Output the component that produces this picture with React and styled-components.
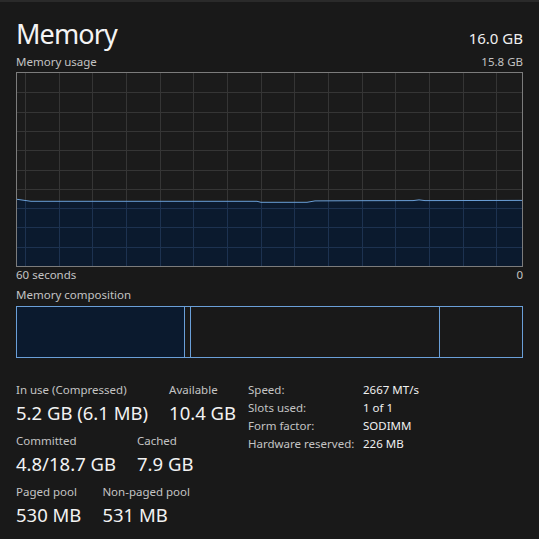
import React from "react";
import styled, { createGlobalStyle } from "styled-components";

const GlobalStyle = createGlobalStyle`
  html, body {
    margin: 0;
    padding: 0;
    background: #191919;
  }
  body {
    font-family: "Noto Sans", "Open Sans", sans-serif;
  }
`;

const CHART_W = 505;
const CHART_H = 193;
const COLS = 15;
const ROWS = 10;
const GRID_OFFSET = 8;

// memory history, x in px from left edge, y in px from top of plot area
const usage = [
  [0, 126.3],
  [14, 128.3],
  [240, 128.3],
  [244, 129.3],
  [290, 129.3],
  [298, 127.9],
  [345, 127.7],
  [396, 127.6],
  [402, 126.9],
  [408, 127.6],
  [CHART_W, 127.4]
];

const composition = [
  { width: 167, filled: true },
  { width: 5, filled: false },
  { width: 248, filled: false },
  { width: 82, filled: false }
];

const stats = [
  [
    { label: "In use (Compressed)", value: "5.2 GB (6.1 MB)" },
    { label: "Available", value: "10.4 GB" }
  ],
  [
    { label: "Committed", value: "4.8/18.7 GB" },
    { label: "Cached", value: "7.9 GB" }
  ],
  [
    { label: "Paged pool", value: "530 MB" },
    { label: "Non-paged pool", value: "531 MB" }
  ]
];

const details = [
  ["Speed:", "2667 MT/s"],
  ["Slots used:", "1 of 1"],
  ["Form factor:", "SODIMM"],
  ["Hardware reserved:", "226 MB"]
];

const Grid = ({ color }) => {
  const vLines = [];
  for (let i = 0; i < COLS; i++) {
    vLines.push(Math.round(GRID_OFFSET + (i * CHART_W) / COLS));
  }
  const hLines = [];
  for (let i = 1; i < ROWS; i++) {
    hLines.push(Math.round((i * CHART_H) / ROWS));
  }
  return (
    <g stroke={color}>
      {vLines.map(x => (
        <line key={`v${x}`} x1={x + 0.5} x2={x + 0.5} y1={0} y2={CHART_H} />
      ))}
      {hLines.map(y => (
        <line key={`h${y}`} x1={0} x2={CHART_W} y1={y + 0.5} y2={y + 0.5} />
      ))}
    </g>
  );
};

const UsageChart = () => {
  const line = usage.map(([x, y]) => `${x},${y}`).join(" ");
  const area = `0,${CHART_H} ${line} ${CHART_W},${CHART_H}`;

  return (
    <svg width={CHART_W} height={CHART_H} style={{ display: "block" }}>
      <defs>
        <clipPath id="usage-area">
          <polygon points={area} />
        </clipPath>
      </defs>
      <Grid color="#353535" />
      <polygon points={area} fill="#0b1a2e" />
      <g clipPath="url(#usage-area)">
        <Grid color="#1d3250" />
      </g>
      <polyline points={line} fill="none" stroke="#6a9fd8" strokeWidth="1" />
    </svg>
  );
};

const App = () => {
  return (
    <>
      <GlobalStyle />
      <Page>
        <Header>
          <Title>Memory</Title>
          <Total>16.0 GB</Total>
        </Header>
        <CaptionRow>
          <Caption>Memory usage</Caption>
          <Caption>15.8 GB</Caption>
        </CaptionRow>
        <ChartFrame>
          <UsageChart />
        </ChartFrame>
        <AxisRow>
          <Caption>60 seconds</Caption>
          <Caption>0</Caption>
        </AxisRow>
        <CompositionCaption>Memory composition</CompositionCaption>
        <CompositionBar>
          {composition.map((seg, i) => (
            <Segment
              key={i}
              $width={seg.width}
              $filled={seg.filled}
              $last={i === composition.length - 1}
            />
          ))}
        </CompositionBar>
        <Stats>
          <StatColumn>
            {stats.map((row, i) => (
              <StatRow key={i}>
                {row.map(item => (
                  <Stat key={item.label}>
                    <StatLabel>{item.label}</StatLabel>
                    <StatValue>{item.value}</StatValue>
                  </Stat>
                ))}
              </StatRow>
            ))}
          </StatColumn>
          <DetailGrid>
            {details.map(([k, v]) => (
              <React.Fragment key={k}>
                <DetailLabel>{k}</DetailLabel>
                <DetailValue>{v}</DetailValue>
              </React.Fragment>
            ))}
          </DetailGrid>
        </Stats>
      </Page>
    </>
  );
};

const Page = styled.div`
  width: 539px;
  height: 539px;
  box-sizing: border-box;
  border-top: 2px solid #2a2a2a;
  padding: 16px 16px 0 16px;
  background: #191919;
  color: #f2f2f2;
  overflow: hidden;
`;

const Header = styled.div`
  display: flex;
  justify-content: space-between;
  align-items: baseline;
  width: 507px;
`;

const Title = styled.div`
  font-size: 27px;
  line-height: 32px;
  color: #f4f4f4;
  letter-spacing: -0.9px;
`;

const Total = styled.div`
  font-size: 15px;
  line-height: 20px;
  color: #f0f0f0;
`;

const Caption = styled.div`
  font-size: 11.5px;
  line-height: 14px;
  color: #c4c4c4;
`;

const CaptionRow = styled.div`
  display: flex;
  justify-content: space-between;
  width: 507px;
  margin-top: 5px;
`;

const ChartFrame = styled.div`
  margin-top: 3px;
  width: 507px;
  height: 195px;
  box-sizing: border-box;
  border: 1px solid #7c7c7c;
  background: #1b1b1b;
`;

const AxisRow = styled(CaptionRow)`
  margin-top: 1px;
`;

const CompositionCaption = styled(Caption)`
  margin-top: 6px;
`;

const CompositionBar = styled.div`
  display: flex;
  margin-top: 4px;
  width: 507px;
  height: 52px;
  box-sizing: border-box;
  border: 1px solid #6a9fd8;
`;

const Segment = styled.div`
  width: ${({ $width }) => $width}px;
  flex: none;
  background: ${({ $filled }) => ($filled ? "#0b1a2e" : "transparent")};
  border-right: ${({ $last }) => ($last ? "none" : "1px solid #6a9fd8")};
`;

const Stats = styled.div`
  display: flex;
  margin-top: 25px;
`;

const StatColumn = styled.div`
  width: 232px;
  display: flex;
  flex-direction: column;
  gap: 10px;
`;

const StatRow = styled.div`
  display: flex;
  gap: 21px;
`;

const Stat = styled.div`
  display: flex;
  flex-direction: column;
  gap: 5px;
`;

const StatLabel = styled.div`
  font-size: 11.5px;
  line-height: 14px;
  color: #c4c4c4;
  white-space: nowrap;
`;

const StatValue = styled.div`
  font-size: 18.5px;
  line-height: 22px;
  color: #f2f2f2;
  white-space: nowrap;
`;

const DetailGrid = styled.div`
  display: grid;
  grid-template-columns: 115px auto;
  grid-auto-rows: 18px;
  margin-top: -2px;
  font-size: 11.5px;
  line-height: 18px;
`;

const DetailLabel = styled.div`
  color: #c4c4c4;
  white-space: nowrap;
`;

const DetailValue = styled.div`
  color: #f0f0f0;
  white-space: nowrap;
`;

export default App;
